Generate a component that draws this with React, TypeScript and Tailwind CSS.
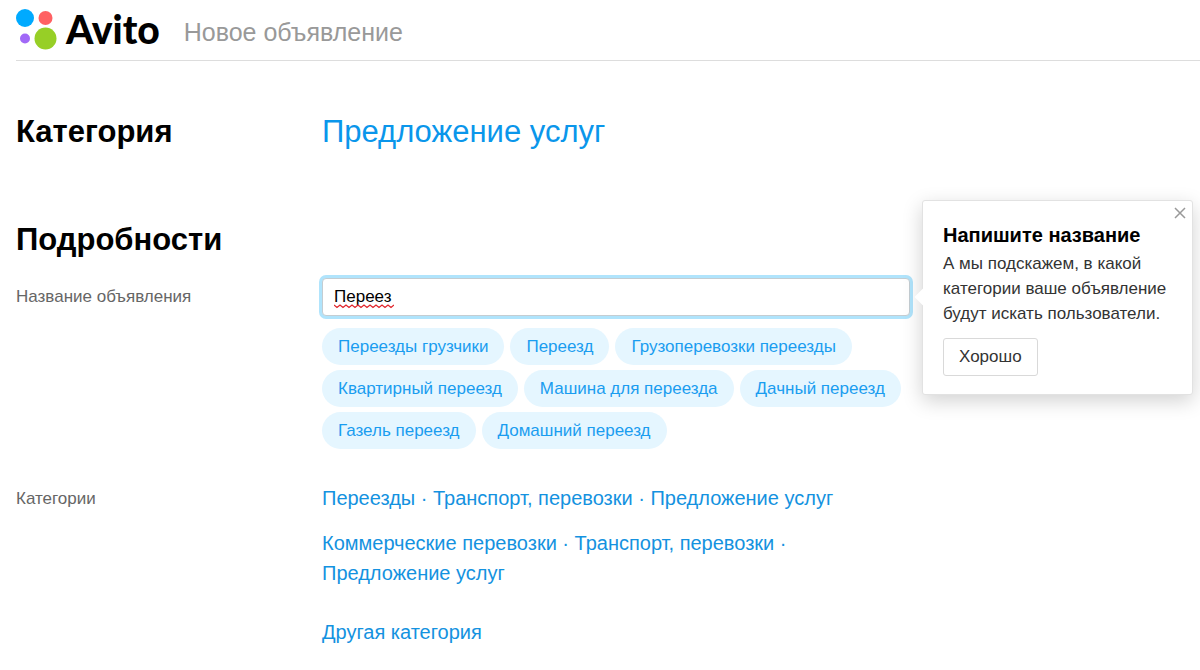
import { ReactNode, useState } from "react";

const suggestions = [
  "Переезды грузчики",
  "Переезд",
  "Грузоперевозки переезды",
  "Квартирный переезд",
  "Машина для переезда",
  "Дачный переезд",
  "Газель переезд",
  "Домашний переезд",
];

const categories = [
  "Переезды · Транспорт, перевозки · Предложение услуг",
  "Коммерческие перевозки · Транспорт, перевозки · Предложение услуг",
];

export default function App() {
  const [title, setTitle] = useState("Переез");
  const [hintOpen, setHintOpen] = useState(true);

  return (
    <div className="overflow-x-hidden bg-white pb-5 pl-4 font-['Liberation_Sans',Arial,sans-serif] text-black">
      <Header />
      <main>
        <Row className="mt-[49px]">
          <h2 className="text-[31px] leading-[44px] font-bold">Категория</h2>
          <a href="#service" className="text-[31px] leading-[44px] text-[#0a96eb]">
            Предложение услуг
          </a>
        </Row>
        <h2 className="mt-16 text-[31px] leading-[44px] font-bold">
          Подробности
        </h2>
        <Row className="mt-4">
          <label
            htmlFor="title"
            className="text-[17px] leading-[38px] text-[#666]"
          >
            Название объявления
          </label>
          <div className="max-w-[588px]">
            <div className="relative">
              <input
                id="title"
                value={title}
                spellCheck={false}
                onChange={(event) => setTitle(event.target.value)}
                className="block h-[38px] w-full rounded-sm border border-[#c4cdd2] bg-white px-[11px] text-[17px] ring-3 ring-[#b0e4fc] outline-none"
              />
              {title === "Переез" && <SpellingMark />}
              {hintOpen && <Hint onClose={() => setHintOpen(false)} />}
            </div>
            <div className="mt-3 flex flex-wrap gap-x-[6px] gap-y-[5px]">
              {suggestions.map((item) => (
                <button
                  key={item}
                  type="button"
                  onClick={() => setTitle(item)}
                  className="h-[37px] rounded-full bg-[#e5f6ff] px-4 text-[17px] text-[#1a9df0]"
                >
                  {item}
                </button>
              ))}
            </div>
          </div>
        </Row>
        <Row className="mt-[34px]">
          <p className="text-[17px] leading-[32px] text-[#666]">Категории</p>
          <div className="flex max-w-[520px] flex-col items-start text-[20px] leading-[30px] text-[#1492e0]">
            {categories.map((item) => (
              <a key={item} href="#category" className="mb-[15px]">
                {item}
              </a>
            ))}
            <a href="#other" className="mt-[14px]">
              Другая категория
            </a>
          </div>
        </Row>
      </main>
    </div>
  );
}

function Row({
  children,
  className,
}: {
  children: ReactNode;
  className: string;
}) {
  return (
    <section
      className={`grid grid-cols-[306px_minmax(0,1fr)] items-start ${className}`}
    >
      {children}
    </section>
  );
}

function Header() {
  return (
    <header className="flex h-[61px] items-center border-b border-[#ddd]">
      <a href="#home" className="flex items-center">
        <svg width="42" height="42" viewBox="0 0 42 42" aria-hidden="true">
          <circle cx="9" cy="9" r="9" fill="#00aaff" />
          <circle cx="29.500" cy="9" r="7" fill="#ff6163" />
          <circle cx="9" cy="29.500" r="5" fill="#a169f7" />
          <circle cx="29.500" cy="29.500" r="11" fill="#97cf26" />
        </svg>
        <span className="ml-2 pb-[2px] font-[Lato,sans-serif] text-[39px] leading-[58px] font-black">
          Avito
        </span>
      </a>
      <h1 className="ml-6 pt-[5px] text-[25px] text-[#999]">
        Новое объявление
      </h1>
    </header>
  );
}

// wavy underline for the misspelled word
function SpellingMark() {
  return (
    <svg
      width="60"
      height="5"
      viewBox="0 0 60 5"
      aria-hidden="true"
      className="pointer-events-none absolute bottom-[7px] left-3"
      fill="none"
      stroke="#e0252b"
      strokeWidth="1.300"
    >
      <path d="M0 1l3 2.500l3-2.500l3 2.500l3-2.500l3 2.500l3-2.500l3 2.500l3-2.500l3 2.500l3-2.500l3 2.500l3-2.500l3 2.500l3-2.500l3 2.500l3-2.500l3 2.500l3-2.500l3 2.500l3-2.500" />
    </svg>
  );
}

function Hint({ onClose }: { onClose: () => void }) {
  return (
    <aside className="absolute -top-[78px] left-full ml-3 w-[271px] rounded-[3px] border border-[#e2e2e2] bg-white px-5 pt-5 pb-[18px] shadow-[0_6px_20px_rgba(0,0,0,0.18)]">
      <span className="absolute top-[90px] -left-[6px] size-3 rotate-45 bg-white" />
      <button
        type="button"
        aria-label="Закрыть"
        onClick={onClose}
        className="absolute top-[6px] right-[6px] text-[#999]"
      >
        <svg width="12" height="12" viewBox="0 0 12 12" aria-hidden="true">
          <path d="M1 1l10 10M11 1L1 11" stroke="currentColor" strokeWidth="1.500" />
        </svg>
      </button>
      <h3 className="text-[20px] leading-[28px] font-bold">
        Напишите название
      </h3>
      <p className="mt-[2px] text-[17px] leading-[25px] whitespace-nowrap text-[#333]">
        А мы подскажем, в какой
        <br />
        категории ваше объявление
        <br />
        будут искать пользователи.
      </p>
      <button
        type="button"
        onClick={onClose}
        className="mt-3 block h-[38px] rounded-[3px] border border-[#d9d9d9] px-[15px] text-[17px] text-[#333]"
      >
        Хорошо
      </button>
    </aside>
  );
}
